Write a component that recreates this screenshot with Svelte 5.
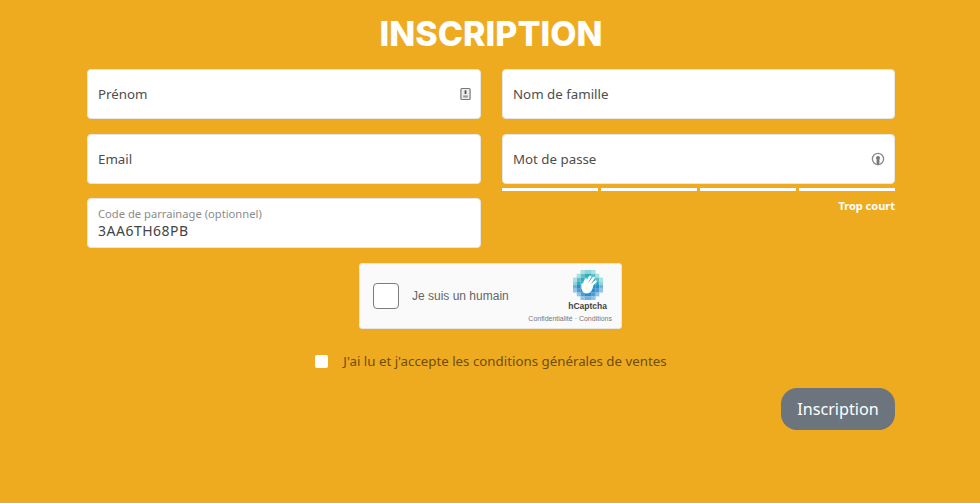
<script>
  let password = '';
  let accepted = false;

  // hCaptcha badge is made of small squares fading from teal to blue
  const cells = [];
  const rows = [
    [3, 4], [2, 5], [1, 6], [0, 7], [0, 7], [1, 6], [2, 5], [3, 4]
  ];
  rows.forEach(([from, to], y) => {
    for (let x = from; x <= to; x++) {
      const edge = x === from || x === to;
      cells.push({ x: x * 3.75, y: y * 3.75, fill: y < 4 ? (edge ? '#8fd6d8' : '#35adbd') : (edge ? '#74b0dd' : '#2d8ccb') });
    }
  });
  // the corners left open by the diamond are filled with paler squares
  [[2, 1], [5, 1], [1, 2], [6, 2], [1, 5], [6, 5], [2, 6], [5, 6]].forEach(([x, y]) => {
    cells.push({ x: x * 3.75, y: y * 3.75, fill: y < 4 ? '#5fc0c9' : '#4c9dd6' });
  });
  [[2, 0], [5, 0], [1, 1], [6, 1], [0, 2], [7, 2], [0, 5], [7, 5], [1, 6], [6, 6], [2, 7], [5, 7]].forEach(([x, y]) => {
    cells.push({ x: x * 3.75, y: y * 3.75, fill: y < 4 ? '#a9e0e0' : '#93c3e6' });
  });
</script>

<main class="page">
  <h1>INSCRIPTION</h1>

  <form class="form" on:submit|preventDefault>
    <div class="col">
      <div class="field">
        <input type="text" placeholder="Prénom" />
        <svg class="field-icon" viewBox="0 0 12 14" width="11" height="14">
          <rect x="1" y="1" width="10" height="12" rx="1" fill="#eee" stroke="#777" stroke-width="1.3" />
          <rect x="5" y="3" width="2" height="4" fill="#555" />
          <rect x="3.5" y="8.5" width="5" height="2.4" fill="#999" />
        </svg>
      </div>
      <div class="field">
        <input type="text" placeholder="Email" />
      </div>
      <div class="field floating">
        <span class="float-label">Code de parrainage (optionnel)</span>
        <input type="text" value="3AA6TH68PB" />
      </div>
    </div>

    <div class="col">
      <div class="field">
        <input type="text" placeholder="Nom de famille" />
      </div>
      <div class="password">
        <div class="field">
          <input type="password" placeholder="Mot de passe" bind:value={password} />
          <svg class="field-icon" viewBox="0 0 14 16" width="14" height="16">
            <circle cx="7" cy="7" r="5.6" fill="none" stroke="#888" stroke-width="1.3" />
            <circle cx="7" cy="6" r="2" fill="#777" />
            <path d="M5.6 7.5h2.8V11L7 13.6 5.6 11z" fill="#777" />
          </svg>
        </div>
        <div class="strength">
          <span></span><span></span><span></span><span></span>
        </div>
        <div class="strength-label">Trop court</div>
      </div>
    </div>

    <div class="captcha">
      <span class="captcha-box"></span>
      <span class="captcha-text">Je suis un humain</span>
      <div class="captcha-brand">
        <svg viewBox="0 0 30 30" width="30" height="30">
          {#each cells as c}
            <rect x={c.x} y={c.y} width="3.8" height="3.8" fill={c.fill} />
          {/each}
          <g fill="none" stroke="#fff" stroke-width="2.4" stroke-linecap="round">
            <path d="M10.5 15 L13 9.5" />
            <path d="M13.5 13 L17 6.8" />
            <path d="M16 14 L20.6 8" />
            <path d="M18 15.5 L22.6 11.6" />
          </g>
          <path d="M8.5 13.5 L11 13 L12 11 L19.5 14 L20.5 15 C19.5 20 17.5 23.5 13.5 23.5 C10 23.5 7.5 20 8.5 13.5 Z" fill="#fff" />
        </svg>
        <strong>hCaptcha</strong>
        <small>Confidentialité · Conditions</small>
      </div>
    </div>

    <label class="terms">
      <input type="checkbox" bind:checked={accepted} />
      <span>J'ai lu et j'accepte les conditions générales de ventes</span>
    </label>

    <div class="actions">
      <button type="submit">Inscription</button>
    </div>
  </form>
</main>

<style>
  :global(body) {
    margin: 0;
    background: #efab1f;
    font-family: "Noto Sans", "Open Sans", sans-serif;
  }

  .page {
    width: 808px;
    height: 503px;
    margin-left: 87px;
    box-sizing: border-box;
  }

  h1 {
    margin: 0;
    padding-top: 13px;
    height: 69px;
    box-sizing: border-box;
    text-align: center;
    color: #fff;
    font-family: Inter, sans-serif;
    font-weight: 800;
    font-size: 34px;
    line-height: 42px;
  }

  .form {
    display: grid;
    grid-template-columns: 394px 393px;
    column-gap: 21px;
  }

  .col {
    display: flex;
    flex-direction: column;
    gap: 15px;
  }

  .col:first-child {
    gap: 14.5px;
  }

  .field {
    position: relative;
    height: 50px;
    background: #fff;
    border: 1px solid #e6e6e6;
    border-radius: 4px;
    box-sizing: border-box;
  }

  .field input {
    width: 100%;
    height: 100%;
    box-sizing: border-box;
    border: none;
    background: transparent;
    padding: 0 10px;
    font: inherit;
    font-size: 13.3px;
    color: #444;
    outline: none;
    border-radius: 4px;
  }

  .field input::placeholder {
    color: #4d4d4d;
    opacity: 1;
  }

  .field-icon {
    position: absolute;
    right: 9px;
    top: 17px;
  }

  .floating {
    display: flex;
    flex-direction: column;
    padding: 8px 10px 0;
  }

  .float-label {
    font-size: 11.2px;
    line-height: 14px;
    color: #8b8b8b;
  }

  .floating input {
    height: 19px;
    padding: 0;
    font-size: 14px;
    letter-spacing: 0.5px;
  }

  .strength {
    display: grid;
    grid-template-columns: repeat(4, 1fr);
    gap: 3.6px;
    margin-top: 4px;
  }

  .strength span {
    height: 3px;
    background: #fff;
  }

  .strength-label {
    margin-top: 7px;
    text-align: right;
    color: #fff;
    font-size: 11px;
    font-weight: 700;
    line-height: 16px;
  }

  .captcha {
    grid-column: 1 / -1;
    justify-self: center;
    display: flex;
    align-items: center;
    width: 263px;
    height: 66px;
    margin: 15px 1px 0 0;
    box-sizing: border-box;
    padding: 0 9px 0 13px;
    background: #fafafa;
    border: 1px solid #e6e6e6;
    border-radius: 3px;
    font-family: "Liberation Sans", Arial, sans-serif;
  }

  .captcha-box {
    width: 26px;
    height: 26px;
    box-sizing: border-box;
    background: #fff;
    border: 1px solid #7c7c7c;
    border-radius: 4px;
  }

  .captcha-text {
    margin-left: 13px;
    font-size: 12px;
    color: #666;
  }

  .captcha-brand {
    margin-left: auto;
    display: flex;
    flex-direction: column;
    align-items: flex-end;
    line-height: 1;
  }

  .captcha-brand svg {
    margin-right: 9px;
  }

  .captcha-brand strong {
    margin: 2px 5px 0 0;
    font-size: 8.5px;
    color: #444;
  }

  .captcha-brand small {
    margin-top: 4px;
    font-size: 7px;
    color: #777;
    white-space: nowrap;
  }

  .terms {
    grid-column: 1 / -1;
    justify-self: center;
    display: flex;
    align-items: center;
    gap: 15px;
    margin-top: 23px;
    font-size: 13.3px;
    line-height: 18px;
    color: #6e4d0f;
  }

  .terms input {
    appearance: none;
    width: 13px;
    height: 13px;
    margin: 0;
    background: #fff;
    border-radius: 2px;
  }

  .actions {
    grid-column: 1 / -1;
    display: flex;
    justify-content: flex-end;
    margin-top: 18px;
  }

  button {
    width: 114px;
    height: 42px;
    border: none;
    border-radius: 16px;
    background: #6c757d;
    color: #fff;
    font: inherit;
    font-size: 16.2px;
  }
</style>
